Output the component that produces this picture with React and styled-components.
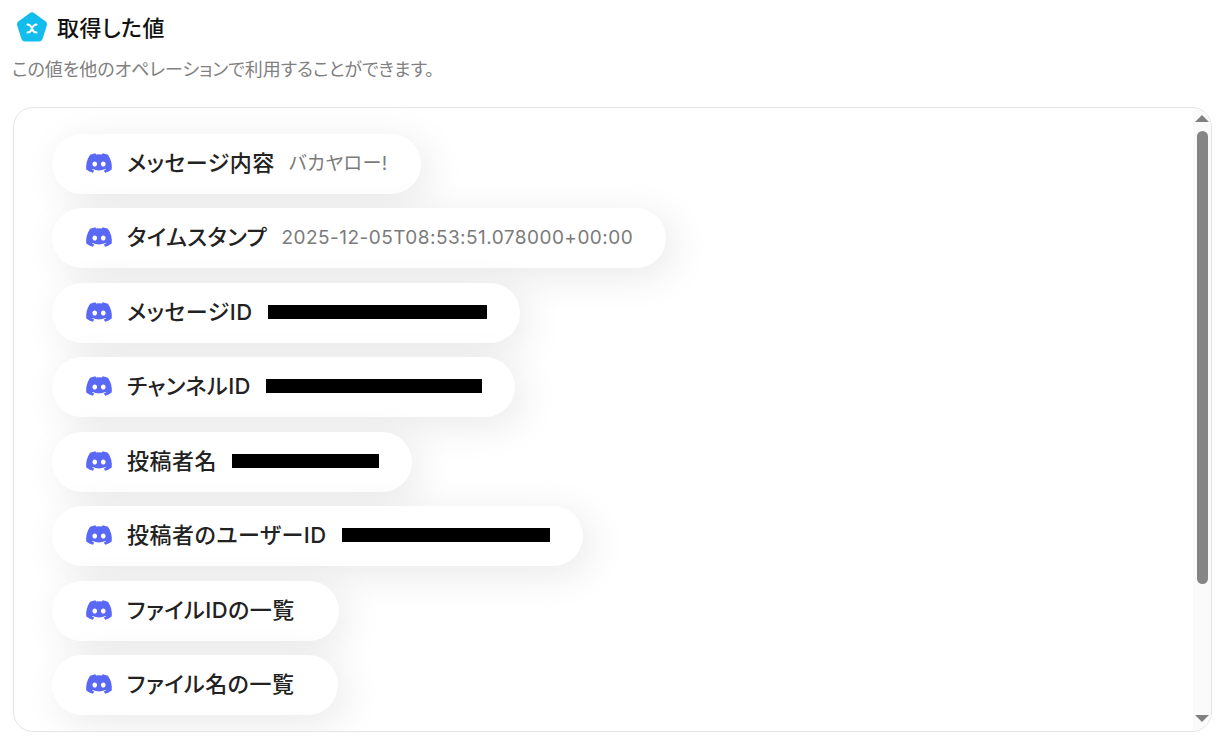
import styled, { createGlobalStyle } from 'styled-components';
import { FaDiscord } from 'react-icons/fa';

const Global = createGlobalStyle`
  html, body { margin: 0; padding: 0; background: #fff; }
  body {
    font-family: "Inter", "Noto Sans CJK JP", sans-serif;
    font-feature-settings: "palt";
    overflow: hidden;
  }
`;

const Page = styled.div`
  width: 1223px;
  height: 743px;
  padding: 10px 11px 11px 13px;
  box-sizing: border-box;
  display: flex;
  flex-direction: column;
`;

const Header = styled.div`
  display: flex;
  align-items: center;
  gap: 9px;
  height: 36px;
  padding-left: 3px;
`;

const Title = styled.h2`
  margin: 0;
  font-size: 22px;
  line-height: 36px;
  font-weight: 500;
  letter-spacing: 0.45px;
  color: #111;
`;

const Sub = styled.p`
  margin: 12px 0 0 -1px;
  font-size: 18px;
  line-height: 24px;
  letter-spacing: -0.06px;
  color: #808080;
`;

const Panel = styled.div`
  flex: 1;
  min-height: 0;
  margin-top: 25px;
  display: flex;
  border: 1px solid #e4e4e4;
  border-radius: 20px;
  overflow: hidden;
`;

const List = styled.div`
  flex: 1;
  padding: 26px 0 0 38px;
  display: flex;
  flex-direction: column;
  align-items: flex-start;
  gap: 14.45px;
  overflow: hidden;
`;

const Pill = styled.div`
  flex: none;
  height: 60px;
  box-sizing: border-box;
  display: flex;
  align-items: center;
  padding: 0 ${p => (p.$bare ? 44 : 33)}px 2px 33px;
  border-radius: 30px;
  background: #fff;
  box-shadow: 8px 8px 40px rgba(0, 0, 0, 0.09);
`;

const Icon = styled(FaDiscord)`
  width: 28px;
  height: 28px;
  color: #5a68f6;
  flex: none;
`;

const Label = styled.span`
  margin-left: 14px;
  font-size: 22px;
  line-height: 30px;
  font-weight: 500;
  letter-spacing: 0.5px;
  color: #222;
  white-space: nowrap;
`;

const Value = styled.span`
  margin: 2px 0 0 14px;
  font-size: 19px;
  line-height: 30px;
  color: #7b7b7b;
  letter-spacing: 0.47px;
  white-space: nowrap;
`;

const Redacted = styled.span`
  display: block;
  margin-left: 15px;
  height: 14px;
  background: #000;
`;

const Rail = styled.div`
  flex: none;
  width: 18px;
  background: #fafafa;
  display: flex;
  flex-direction: column;
  align-items: center;
`;

const Arrow = styled.div`
  flex: none;
  width: 0;
  height: 0;
  margin: ${p => (p.$down ? 'auto 0 9px' : '7px 0 0')};
  border-left: 7px solid transparent;
  border-right: 7px solid transparent;
  ${p => (p.$down ? 'border-top: 7px solid #808080;' : 'border-bottom: 7px solid #808080;')}
`;

const Thumb = styled.div`
  flex: none;
  width: 11px;
  height: 453px;
  margin-top: 9px;
  border-radius: 6px;
  background: #858585;
`;

const rows = [
  { label: 'メッセージ内容', value: 'バカヤロー!' },
  { label: 'タイムスタンプ', value: '2025-12-05T08:53:51.078000+00:00' },
  { label: 'メッセージID', hidden: 219 },
  { label: 'チャンネルID', hidden: 216 },
  { label: '投稿者名', hidden: 147 },
  { label: '投稿者のユーザーID', hidden: 208 },
  { label: 'ファイルIDの一覧' },
  { label: 'ファイル名の一覧' },
];

function Logo() {
  return (
    <svg width="32" height="32" viewBox="0 0 32 32">
      <path
        d="M13.6 1.2a4 4 0 0 1 4.8 0l11 8a4 4 0 0 1 1.4 4.4l-4.1 13a4 4 0 0 1-3.8 2.9H9.1a4 4 0 0 1-3.8-2.9l-4.1-13a4 4 0 0 1 1.4-4.4z"
        fill="#12bdee"
      />
      <path d="M11.5 12.5q3 .2 4.5 3.5q1.5-3.3 4.5-3.5M11.5 20.5q3-.2 4.5-3.5q1.5 3.3 4.5 3.5" fill="none" stroke="#fff" strokeWidth="2" strokeLinecap="round" />
    </svg>
  );
}

export default function App() {
  return (
    <Page>
      <Global />
      <Header>
        <Logo />
        <Title>取得した値</Title>
      </Header>
      <Sub>この値を他のオペレーションで利用することができます。</Sub>
      <Panel>
        <List>
          {rows.map(r => (
            <Pill key={r.label} $bare={!r.value && !r.hidden}>
              <Icon />
              <Label>{r.label}</Label>
              {r.value && <Value>{r.value}</Value>}
              {r.hidden && <Redacted style={{ width: r.hidden }} />}
            </Pill>
          ))}
        </List>
        <Rail>
          <Arrow />
          <Thumb />
          <Arrow $down />
        </Rail>
      </Panel>
    </Page>
  );
}
